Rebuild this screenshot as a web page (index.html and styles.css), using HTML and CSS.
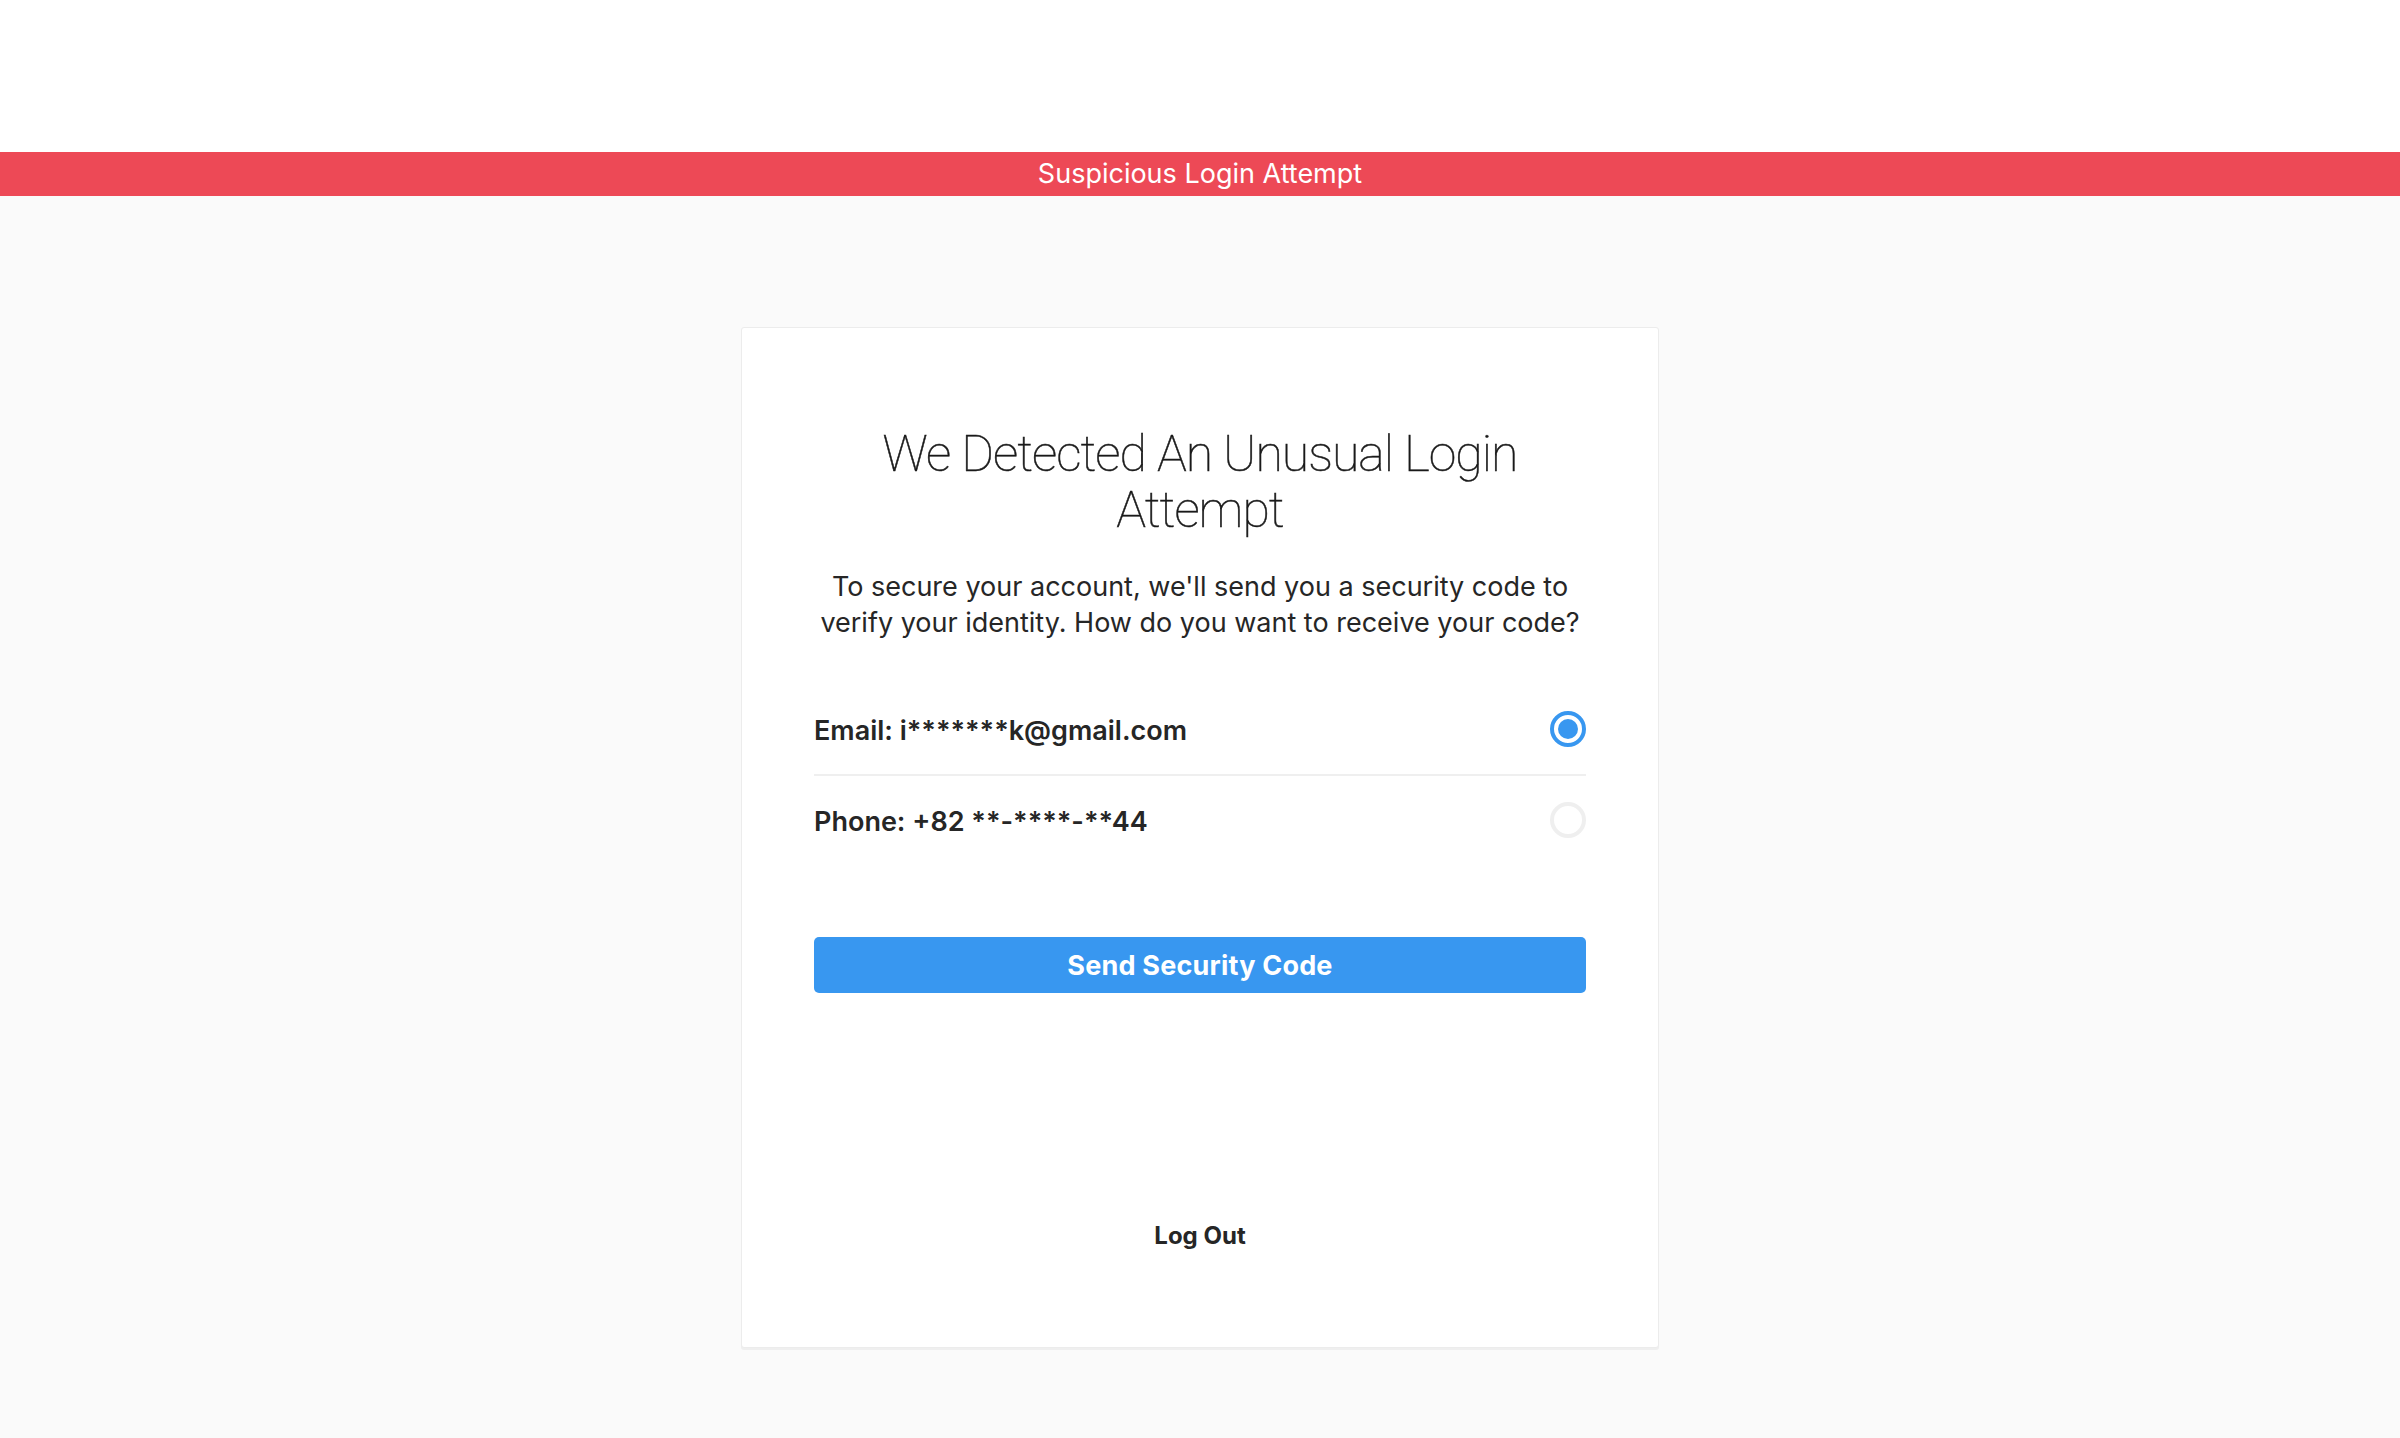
FILE: index.html
```html
<!DOCTYPE html>
<html lang="en">
<head>
<meta charset="utf-8">
<title>Suspicious Login Attempt</title>
<link rel="stylesheet" href="styles.css">
</head>
<body>
<header class="topbar"></header>
<div class="alert">Suspicious Login Attempt</div>
<main class="page">
  <section class="card">
    <h1 class="title">We Detected An Unusual Login Attempt</h1>
    <p class="lead">To secure your account, we'll send you a security code to verify your identity. How do you want to receive your code?</p>
    <div class="options">
      <label class="option">
        <span class="option-text">Email: i*******k@gmail.com</span>
        <span class="radio checked"></span>
      </label>
      <label class="option">
        <span class="option-text">Phone: +82 **-****-**44</span>
        <span class="radio"></span>
      </label>
    </div>
    <button class="send" type="button">Send Security Code</button>
    <div class="logout">Log Out</div>
  </section>
</main>
</body>
</html>
```
FILE: styles.css
```css
html, body {
  margin: 0;
  padding: 0;
}
body {
  background: #fafafa;
  color: #262626;
  font-family: Inter, "Liberation Sans", Arial, sans-serif;
  min-height: 1438px;
}
.topbar {
  height: 152px;
  background: #ffffff;
}
.alert {
  height: 44px;
  line-height: 44px;
  background: #ed4956;
  color: #ffffff;
  text-align: center;
  font-size: 27px;
}
.page {
  padding-top: 131px;
  display: flex;
  justify-content: center;
}
.card {
  width: 918px;
  box-sizing: border-box;
  background: #ffffff;
  border: 1px solid #ececec;
  border-radius: 3px;
  box-shadow: 0 2px 0 #efefef;
  padding: 98px 72px 93px;
  display: flex;
  flex-direction: column;
}
.title {
  margin: 0;
  font-family: Roboto, "Liberation Sans", sans-serif;
  font-weight: 100;
  font-size: 50px;
  line-height: 56px;
  text-align: center;
  letter-spacing: -1px;
  padding: 0 40px;
  color: #1a1a1a;
  -webkit-text-stroke: 0.5px #1a1a1a;
}
.lead {
  margin: 31px 0 0;
  font-size: 27px;
  line-height: 36px;
  text-align: center;
}
.options {
  margin-top: 44px;
  display: flex;
  flex-direction: column;
}
.option {
  height: 89px;
  display: flex;
  align-items: center;
  justify-content: space-between;
}
.option + .option {
  border-top: 2px solid #efefef;
}
.option-text {
  font-size: 27px;
  font-weight: 600;
  padding-top: 2px;
}
.radio {
  width: 36px;
  height: 36px;
  box-sizing: border-box;
  border: 4px solid #efefef;
  border-radius: 50%;
  padding: 4px;
  background-clip: content-box;
  margin-bottom: 2px;
}
.radio.checked {
  border-color: #3897f0;
  background-color: #3897f0;
}
.send {
  margin-top: 72px;
  height: 56px;
  border: 0;
  border-radius: 5px;
  background: #3897f0;
  color: #ffffff;
  font-family: Inter, "Liberation Sans", Arial, sans-serif;
  font-size: 27px;
  font-weight: 700;
  letter-spacing: 0.2px;
  padding: 0;
}
.logout {
  margin-top: 225px;
  text-align: center;
  font-size: 24px;
  line-height: 36px;
  font-weight: 700;
}
```
